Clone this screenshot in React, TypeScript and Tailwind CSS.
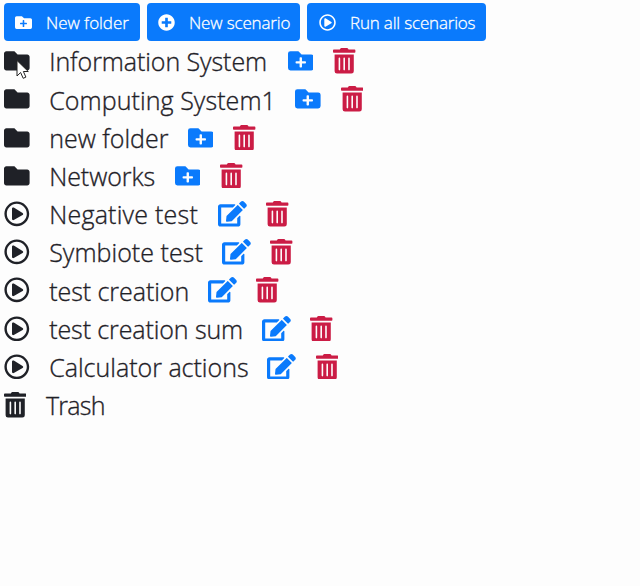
import { FaFolder, FaFolderPlus, FaTrashAlt, FaEdit, FaRegPlayCircle, FaPlusCircle } from "react-icons/fa";

type Row = { name: string; kind: "folder" | "scenario"; label: string };

const rows: Row[] = [
  { name: "Information System", kind: "folder", label: "w-[220.5px] tracking-[-0.07px]" },
  { name: "Computing System1", kind: "folder", label: "w-[228px] tracking-[0.08px]" },
  { name: "new folder", kind: "folder", label: "w-[120.5px] tracking-[0px]" },
  { name: "Networks", kind: "folder", label: "w-[107.5px] tracking-[-0.05px]" },
  { name: "Negative test", kind: "scenario", label: "w-[150.5px] tracking-[0.23px]" },
  { name: "Symbiote test", kind: "scenario", label: "w-[154.5px] tracking-[0.05px]" },
  { name: "test creation", kind: "scenario", label: "w-[140.5px] tracking-[-0.05px]" },
  { name: "test creation sum", kind: "scenario", label: "w-[194.5px] tracking-[-0.1px]" },
  { name: "Calculator actions", kind: "scenario", label: "w-[200px] tracking-[0px]" },
];

const button =
  "flex h-[38px] items-center rounded-[4px] bg-[#0a7afc] text-[17px] whitespace-nowrap text-white [-webkit-text-stroke:0.3px]";

export default function App() {
  return (
    <main className="relative h-[586px] w-[640px] overflow-hidden bg-[#fdfdfd] pt-[3px] pl-1 font-['Open_Sans','Noto_Sans',sans-serif] font-light text-[#1f2127]">
      <header className="flex gap-[7px]">
        <button className={`${button} w-[136px] gap-[14px] pl-[11px] tracking-[-0.05px]`}>
          <FaFolderPlus className="mt-[1px] size-[17px] shrink-0" />
          <span className="pt-[2px]">New folder</span>
        </button>
        <button className={`${button} w-[153px] gap-[14px] pl-[11px] tracking-[-0.15px]`}>
          <FaPlusCircle className="size-[17px] shrink-0" />
          <span className="pt-[2px]">New scenario</span>
        </button>
        <button className={`${button} w-[179px] gap-[14px] pl-[12px] tracking-[-0.18px]`}>
          <FaRegPlayCircle className="size-[17px] shrink-0" />
          <span className="pt-[2px]">Run all scenarios</span>
        </button>
      </header>
      <ul className="pt-[1px] text-[25px] leading-[38.2px]">
        {rows.map((row) => (
          <li key={row.name} className="flex h-[38.2px] items-center">
            {row.kind === "folder" ? (
              <FaFolder className="size-[25.6px] shrink-0" />
            ) : (
              <FaRegPlayCircle className="size-[25.6px] shrink-0" />
            )}
            <span className={`mt-[0.8px] ml-[19.6px] -mr-[1px] shrink-0 whitespace-nowrap [-webkit-text-stroke:0.35px] ${row.label}`}>
              {row.name}
            </span>
            {row.kind === "folder" ? (
              <FaFolderPlus className="ml-[19.2px] size-[25.6px] shrink-0 text-[#0a7afc]" />
            ) : (
              <FaEdit className="ml-[19.2px] h-[25.6px] w-[28.8px] shrink-0 text-[#0a7afc]" />
            )}
            <FaTrashAlt className="ml-[19.7px] h-[25.6px] w-[22.4px] shrink-0 text-[#cb1c45]" />
          </li>
        ))}
        <li className="flex h-[38.2px] items-center">
          <FaTrashAlt className="h-[25.6px] w-[22.4px] shrink-0" />
          <span className="mt-[0.8px] ml-[19.6px] tracking-[-0.75px] [-webkit-text-stroke:0.35px]">Trash</span>
        </li>
      </ul>
      <svg className="absolute top-[59px] left-[16px] h-[21px] w-[13px]" viewBox="0 0 13 20">
        <path d="M1 1v15.5l3.6-3.5 2.6 5.8 2.7-1.2-2.5-5.6h4.9z" fill="#fff" stroke="#222" strokeWidth="1" />
      </svg>
    </main>
  );
}
